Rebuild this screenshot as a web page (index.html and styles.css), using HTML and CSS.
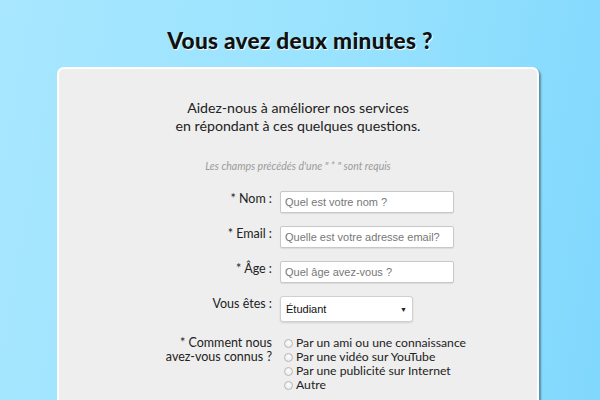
FILE: index.html
```html
<!DOCTYPE html>
<html lang="fr">
<head>
<meta charset="utf-8">
<title>Vous avez deux minutes ?</title>
<link rel="stylesheet" href="styles.css">
</head>
<body>
<h1 class="title">Vous avez deux minutes ?</h1>
<div class="card">
  <p class="intro">Aidez-nous à améliorer nos services<br>en répondant à ces quelques questions.</p>
  <p class="note">Les champs précédés d'une " * " sont requis</p>
  <form class="form">
    <label class="lbl" for="nom">* Nom :</label>
    <input class="field" id="nom" type="text" placeholder="Quel est votre nom ?">
    <label class="lbl" for="email">* Email :</label>
    <input class="field" id="email" type="text" placeholder="Quelle est votre adresse email?">
    <label class="lbl" for="age">* Âge :</label>
    <input class="field" id="age" type="text" placeholder="Quel âge avez-vous ?">
    <label class="lbl lbl-sel">Vous êtes :</label>
    <div class="select"><span>Étudiant</span><span class="arrow">▼</span></div>
    <div class="lbl lbl-radio">* Comment nous<br>avez-vous connus ?</div>
    <div class="radios">
      <label class="opt"><input type="radio" name="src" class="radio">Par un ami ou une connaissance</label>
      <label class="opt"><input type="radio" name="src" class="radio">Par une vidéo sur YouTube</label>
      <label class="opt"><input type="radio" name="src" class="radio">Par une publicité sur Internet</label>
      <label class="opt"><input type="radio" name="src" class="radio">Autre</label>
    </div>
  </form>
</div>
</body>
</html>
```
FILE: styles.css
```css
html, body {
  margin: 0;
  padding: 0;
  height: 100%;
  overflow: hidden;
}
body {
  background: linear-gradient(100deg, #a8e7ff 0%, #9ae3fe 50%, #80d8fd 100%);
  font-family: "Lato", "DejaVu Sans", sans-serif;
  color: #222;
}
.title {
  margin: 0;
  padding-top: 26px;
  height: 41px;
  text-align: center;
  font-family: "Lato", sans-serif;
  font-weight: 900;
  font-size: 22.6px;
  line-height: 30px;
  color: #111;
  text-shadow: 1px 1px 1px #fff;
  letter-spacing: 0.3px;
}
.card {
  width: 482px;
  margin-left: 57px;
  background: #eeeeee;
  border: 2px solid #fff;
  border-radius: 7px;
  box-shadow: 2px 2px 2px rgba(0,0,0,0.35);
  height: 400px;
  padding-top: 30px;
  box-sizing: border-box;
}
.intro {
  margin: 0;
  text-align: center;
  font-size: 14.2px;
  line-height: 18px;
  color: #222;
}
.note {
  margin: 25px 0 0;
  text-align: center;
  font-size: 10.5px;
  line-height: 12px;
  font-style: italic;
  color: #9a9a9a;
}
.form {
  margin-top: 19px;
  display: grid;
  grid-template-columns: 212px auto;
  column-gap: 9px;
  row-gap: 13px;
  align-items: start;
}
.lbl {
  text-align: right;
  font-size: 12.5px;
  line-height: 15px;
  color: #222;
  margin-right: -1px;
}
.field {
  width: 174px;
  height: 22px;
  box-sizing: border-box;
  border: 1px solid #c8c8c8;
  border-radius: 2px;
  background: #fff;
  font-family: "Liberation Sans", Arial, sans-serif;
  font-size: 11px;
  padding: 0 4px;
  margin: 0;
  box-shadow: 0 1px 1px rgba(0,0,0,0.08);
}
.field::placeholder {
  color: #777;
}
.select {
  width: 133px;
  height: 26px;
  box-sizing: border-box;
  border: 1px solid #d0d0d0;
  border-radius: 3px;
  background: #fff;
  box-shadow: 0 1px 2px rgba(0,0,0,0.12);
  display: flex;
  align-items: center;
  justify-content: space-between;
  padding: 0 5px 0 5px;
  font-family: "Liberation Sans", Arial, sans-serif;
  font-size: 11px;
  color: #111;
}
.arrow {
  font-size: 7px;
  color: #222;
}
.lbl-radio {
  margin-top: 1px;
  line-height: 14px;
}
.radios {
  display: flex;
  flex-direction: column;
  margin-top: 1px;
  margin-left: 4px;
}
.opt {
  display: flex;
  align-items: center;
  font-size: 12.2px;
  line-height: 14px;
  height: 14px;
  color: #222;
}
.radio {
  appearance: none;
  -webkit-appearance: none;
  width: 9px;
  height: 9px;
  margin: 0 3px 0 0;
  border: 1px solid #b8b8b8;
  border-radius: 50%;
  background: radial-gradient(circle at 50% 40%, #fdfdfd, #e4e4e4);
  box-sizing: border-box;
}
```
